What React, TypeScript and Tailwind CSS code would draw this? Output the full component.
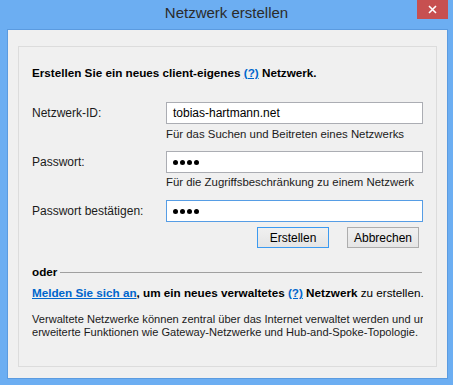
import React from 'react'

const font = { fontFamily: '"Liberation Sans", Arial, sans-serif' }

const Dots = () => (
  <div className="flex items-center gap-[2px]">
    {[0, 1, 2, 3].map(i => (
      <span key={i} className="block w-[5px] h-[5px] rounded-full bg-black" />
    ))}
  </div>
)

interface RowProps {
  label: string
  focused?: boolean
  children: React.ReactNode
}

const FieldRow: React.FC<RowProps> = ({ label, focused, children }) => (
  <div className="flex items-center h-[22px]">
    <div className="w-[147px] pl-[13px] text-[12px] text-[#1a1a1a]">{label}</div>
    <div
      className={`w-[257px] h-[22px] flex items-center px-[6px] bg-white border text-[12px] text-black ${
        focused ? 'border-[#569de5]' : 'border-[#abadb3]'
      }`}
    >
      {children}
    </div>
  </div>
)

const Help = ({ text }: { text: string }) => (
  <div className="pl-[147px] h-[14px] leading-[14px] text-[11.4px] text-[#1a1a1a]">{text}</div>
)

export default function App() {
  return (
    <div className="w-[453px] h-[385px] bg-[#6caef2] flex flex-col overflow-hidden" style={font}>
      <div className="relative h-[29px] flex items-center justify-center">
        <span className="text-[15px] text-[#2b2b2b] pb-[2px]">Netzwerk erstellen</span>
        <div className="absolute right-[5px] top-0 w-[31px] h-[19px] bg-[#c75050] flex items-center justify-center">
          <svg width="9" height="9" viewBox="0 0 9 9">
            <path d="M1 1 L8 8 M8 1 L1 8" stroke="white" strokeWidth="1.6" />
          </svg>
        </div>
      </div>

      <div className="ml-[7px] mr-[5px] h-[350px] bg-[#f0f0f0] border border-[#5b9be0] pt-[16px] px-[10px]">
        <div className="h-[321px] border border-[#dcdcdc] pt-[18px] flex flex-col">
          <div className="pl-[13px] h-[16px] leading-[16px] text-[11.7px] font-bold text-black">
            Erstellen Sie ein neues client-eigenes{' '}
            <span className="text-[#0066cc] underline">(?)</span> Netzwerk.
          </div>

          <div className="mt-[21px]">
            <FieldRow label="Netzwerk-ID:">tobias-hartmann.net</FieldRow>
          </div>
          <div className="mt-[3px]">
            <Help text="Für das Suchen und Beitreten eines Netzwerks" />
          </div>

          <div className="mt-[10px]">
            <FieldRow label="Passwort:">
              <Dots />
            </FieldRow>
          </div>
          <div className="mt-[2px]">
            <Help text="Für die Zugriffsbeschränkung zu einem Netzwerk" />
          </div>

          <div className="mt-[11px]">
            <FieldRow label="Passwort bestätigen:" focused>
              <Dots />
            </FieldRow>
          </div>

          <div className="mt-[5px] flex justify-end gap-[18px] pr-[17px]">
            <button className="w-[72px] h-[21px] border border-[#3c9af0] bg-gradient-to-b from-[#f0f0f0] to-[#e5e5e5] text-[12px] text-black">
              Erstellen
            </button>
            <button className="w-[72px] h-[21px] border border-[#adadad] bg-gradient-to-b from-[#f0f0f0] to-[#e5e5e5] text-[12px] text-black">
              Abbrechen
            </button>
          </div>

          <div className="mt-[17px] pl-[13px] pr-[14px] flex items-center gap-[3px] h-[14px]">
            <span className="text-[11.7px] font-bold text-black">oder</span>
            <div className="flex-1 h-px bg-[#a0a0a0]" />
          </div>

          <div className="mt-[7px] pl-[13px] h-[14px] leading-[14px] text-[11.7px] text-black whitespace-nowrap">
            <span className="font-bold text-[#0066cc] underline">Melden Sie sich an</span>
            <span className="font-bold">, um ein neues verwaltetes </span>
            <span className="font-bold text-[#0066cc] underline">(?)</span>
            <span className="font-bold"> Netzwerk</span> zu erstellen.
          </div>

          <div className="mt-[13px] pl-[13px] w-[404px] text-[11.1px] leading-[13px] text-[#1a1a1a] overflow-hidden whitespace-nowrap">
            <div>Verwaltete Netzwerke können zentral über das Internet verwaltet werden und unterstützen</div>
            <div>erweiterte Funktionen wie Gateway-Netzwerke und Hub-and-Spoke-Topologie.</div>
          </div>
        </div>
      </div>
    </div>
  )
}
